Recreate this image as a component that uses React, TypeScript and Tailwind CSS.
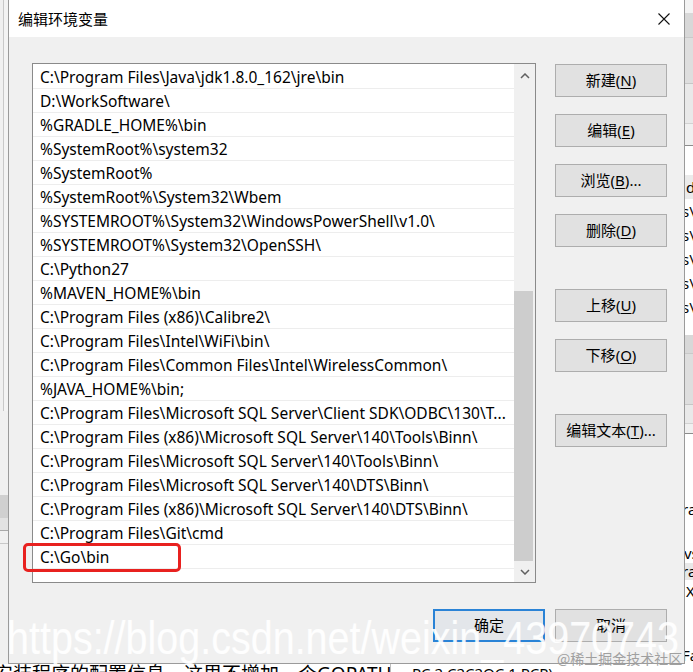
import React from "react";

const rows: string[] = [
  "C:\\Program Files\\Java\\jdk1.8.0_162\\jre\\bin",
  "D:\\WorkSoftware\\",
  "%GRADLE_HOME%\\bin",
  "%SystemRoot%\\system32",
  "%SystemRoot%",
  "%SystemRoot%\\System32\\Wbem",
  "%SYSTEMROOT%\\System32\\WindowsPowerShell\\v1.0\\",
  "%SYSTEMROOT%\\System32\\OpenSSH\\",
  "C:\\Python27",
  "%MAVEN_HOME%\\bin",
  "C:\\Program Files (x86)\\Calibre2\\",
  "C:\\Program Files\\Intel\\WiFi\\bin\\",
  "C:\\Program Files\\Common Files\\Intel\\WirelessCommon\\",
  "%JAVA_HOME%\\bin;",
  "C:\\Program Files\\Microsoft SQL Server\\Client SDK\\ODBC\\130\\T...",
  "C:\\Program Files (x86)\\Microsoft SQL Server\\140\\Tools\\Binn\\",
  "C:\\Program Files\\Microsoft SQL Server\\140\\Tools\\Binn\\",
  "C:\\Program Files\\Microsoft SQL Server\\140\\DTS\\Binn\\",
  "C:\\Program Files (x86)\\Microsoft SQL Server\\140\\DTS\\Binn\\",
  "C:\\Program Files\\Git\\cmd",
  "C:\\Go\\bin",
];

const FONT = "font-['Noto_Sans','Noto_Sans_CJK_SC',sans-serif]";

function Btn({
  pre,
  k,
  post = "",
  className = "",
  primary = false,
}: {
  pre: string;
  k?: string;
  post?: string;
  className?: string;
  primary?: boolean;
}) {
  return (
    <div
      className={
        "h-[33px] w-[112px] flex items-center justify-center text-[15px] text-black leading-none " +
        (primary
          ? "border-2 border-[#2a83d6] bg-[#e3e6ea] "
          : "border border-[#adadad] bg-[#e1e1e1] ") +
        className
      }
    >
      <span>
        {pre}
        {k ? (
          <>
            (<span className="underline underline-offset-[2px] decoration-[1px]">{k}</span>)
          </>
        ) : null}
        {post}
      </span>
    </div>
  );
}

function Chevron({ up }: { up: boolean }) {
  return (
    <svg width="10" height="6" viewBox="0 0 10 6">
      <path
        d={up ? "M1 5 L5 1 L9 5" : "M1 1 L5 5 L9 1"}
        fill="none"
        stroke="#606060"
        strokeWidth="1.5"
      />
    </svg>
  );
}

function RightStrip() {
  const t = "text-[15px] leading-none text-black whitespace-nowrap flex items-center";
  return (
    <div className={"absolute left-[685px] top-0 w-[8px] h-[672px] overflow-hidden flex flex-col bg-white " + FONT}>
      <div className="h-[13px] bg-[#f3f3f3]" />
      <div className="h-[24px] bg-[#d8d8d8]" />
      <div className="h-[46px] bg-[#dedede] border-t border-[#c9c9c9]" />
      <div className="h-[40px] bg-[#e9e9e9] border-t border-[#c6c6c6]" />
      <div className="h-[22px] bg-[#f0f0f0] border-t border-[#d2d2d2]" />
      <div className="h-[1px] bg-[#8c8c8c]" />
      <div className="h-[29px] bg-white" />
      <div className={"h-[24px] bg-[#ebebeb] pl-[1px] " + t}>d</div>
      <div className={"h-[24px] -ml-[3px] " + t}>s\</div>
      <div className={"h-[24px] -ml-[3px] " + t}>s\</div>
      <div className={"h-[24px] -ml-[3px] " + t}>s\</div>
      <div className={"h-[24px] -ml-[3px] " + t}>s\</div>
      <div className={"h-[24px] -ml-[3px] " + t}>s\</div>
      <div className="h-[16px] bg-white" />
      <div className="h-[18px] bg-[#d8d8d8]" />
      <div className="h-[51px] bg-[#dedede] border-t border-[#c9c9c9]" />
      <div className="h-[19px] bg-[#e9e9e9] border-t border-[#c6c6c6]" />
      <div className="h-[10px] bg-[#f0f0f0] border-t border-[#d2d2d2]" />
      <div className="h-[1px] bg-[#8c8c8c]" />
      <div className="h-[63px] bg-white" />
      <div className={"h-[24px] -ml-[3px] " + t}>ra</div>
      <div className="h-[22px] bg-white" />
      <div className={"h-[20px] -ml-[1px] " + t}>vs</div>
      <div className={"h-[17px] bg-[#e8e8e8] -ml-[3px] " + t}>ra</div>
      <div className={"h-[22px] pl-[1px] " + t}>X</div>
      <div className="h-[42px] bg-white" />
      <div className={"h-[22px] -ml-[3px] " + t}>Fa</div>
      <div className="flex-1 bg-white" />
    </div>
  );
}

function LeftStrip() {
  return (
    <div className="absolute left-0 top-0 w-[8px] h-[664px] flex flex-col bg-[#f0f0f0]">
      <div className="h-[411px] flex">
        <div className="w-[3px] bg-[#f0f0f0]" />
        <div className="w-[1px] bg-[#c8c8c8]" />
        <div className="flex-1 bg-[#f3f3f3]" />
      </div>
      <div className="h-[84px] bg-[#f0f0f0]" />
      <div className="h-[23px] bg-[#d0d0d0]" />
      <div className="h-[12px] bg-[#e2e2e2]" />
      <div className="h-[1px] bg-[#a8a8a8]" />
      <div className="h-[12px] bg-[#f0f0f0]" />
      <div className="h-[1px] bg-[#c8c8c8]" />
      <div className="flex-1 bg-[#f0f0f0]" />
    </div>
  );
}

function BottomStrip() {
  return (
    <div className={"absolute left-0 top-[664px] w-[693px] h-[8px] bg-white overflow-hidden flex " + FONT}>
      <div className="w-[390px] overflow-hidden">
        <div className="-ml-[6px] pt-[1px] text-[19px] leading-none text-black whitespace-nowrap">
          安装程序的配置信息，这里不增加一个GOPATH
        </div>
      </div>
      <div className="w-[1px] bg-[#bdbdbd]" />
      <div className="flex-1 pl-[21px] overflow-hidden">
        <div className="text-[15px] leading-none text-black whitespace-nowrap pt-[2px]">
          PC 2 C2C2OC 1 PCP)
        </div>
      </div>
    </div>
  );
}

export default function App() {
  return (
    <div className={"relative w-[693px] h-[672px] overflow-hidden bg-[#f0f0f0] " + FONT}>
      <LeftStrip />
      <RightStrip />
      <BottomStrip />

      {/* Dialog */}
      <div className="absolute left-[8px] top-0 w-[677px] h-[664px] flex flex-col bg-[#f0f0f0] border-l border-r border-b border-[#9a9a9a]">
        {/* title bar */}
        <div className="h-[37px] bg-white flex items-center justify-between pl-[9px] pr-[14px]">
          <span className="text-[15px] text-black leading-none pt-[1px]">编辑环境变量</span>
          <svg width="12" height="12" viewBox="0 0 12 12" className="mt-[1px]">
            <path d="M0.5 0.5 L11.5 11.5 M11.5 0.5 L0.5 11.5" stroke="#111" strokeWidth="1.1" />
          </svg>
        </div>

        {/* body */}
        <div className="flex-1 flex flex-col pl-[23px] pr-[17px] pt-[26px] pb-[21px]">
          <div className="flex">
            {/* list */}
            <div className="w-[504px] h-[520px] border border-[#8a8a8a] bg-white flex">
              <div className="flex-1 flex flex-col pt-[1px] overflow-hidden">
                {rows.map((r, i) => (
                  <div
                    key={i}
                    className="h-[24px] shrink-0 border-b border-[#ededed] pl-[7px] pt-[2px] flex items-center text-[15.5px] leading-none text-black whitespace-nowrap overflow-hidden"
                  >
                    {r}
                  </div>
                ))}
              </div>
              {/* scrollbar */}
              <div className="w-[21px] flex flex-col bg-[#f0f0f0]">
                <div className="h-[21px] flex items-center justify-center pt-[3px]">
                  <Chevron up />
                </div>
                <div className="h-[206px]" />
                <div className="flex-1 bg-[#cdcdcd] mr-[2px]" />
                <div className="h-[21px] flex items-center justify-center pt-[1px]">
                  <Chevron up={false} />
                </div>
              </div>
            </div>

            {/* buttons */}
            <div className="ml-[19px] flex flex-col pt-[1px]">
              <Btn pre="新建" k="N" />
              <Btn pre="编辑" k="E" className="mt-[17px]" />
              <Btn pre="浏览" k="B" post="..." className="mt-[17px]" />
              <Btn pre="删除" k="D" className="mt-[17px]" />
              <Btn pre="上移" k="U" className="mt-[42px]" />
              <Btn pre="下移" k="O" className="mt-[17px]" />
              <Btn pre="编辑文本" k="T" post="..." className="mt-[42px]" />
            </div>
          </div>

          {/* footer */}
          <div className="mt-[26px] flex justify-end gap-[10px]">
            <Btn pre="确定" primary />
            <Btn pre="取消" />
          </div>
        </div>
      </div>

      {/* red annotation */}
      <div className="absolute left-[23px] top-[543px] w-[158px] h-[29px] border-[3px] border-[#e8211f] rounded-[5px]" />

      {/* watermarks */}
      <div className="absolute left-[7px] top-[622px] text-[39.5px] leading-none text-white/90 whitespace-nowrap font-['Liberation_Sans',Arial,sans-serif] origin-bottom scale-y-[1.17]">
        https://blog.csdn.net/weixin_43970743
      </div>
      <div className="absolute left-[557px] top-[651px] text-[14px] leading-none text-[#a0a0a0] whitespace-nowrap font-['Noto_Sans_CJK_SC',sans-serif]">
        @稀土掘金技术社区
      </div>
    </div>
  );
}
